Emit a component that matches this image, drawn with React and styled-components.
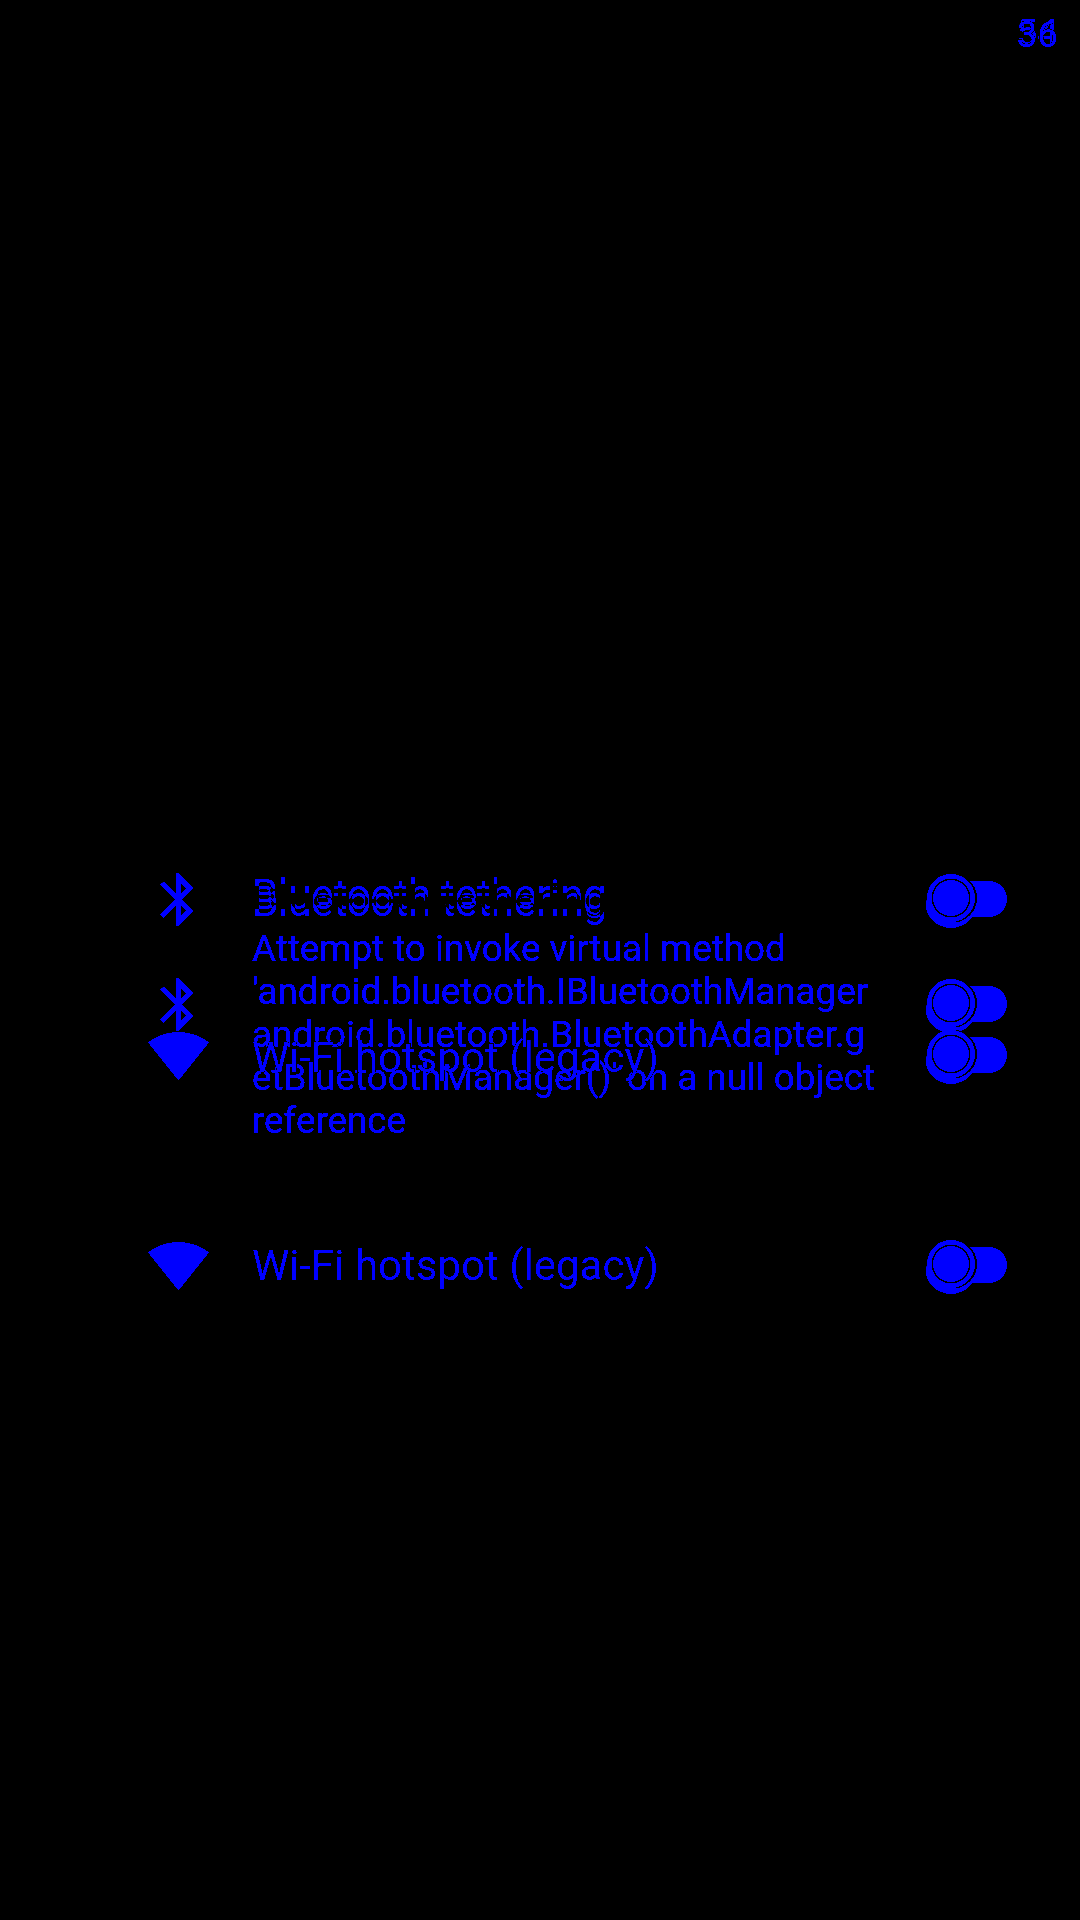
import styled, { createGlobalStyle } from "styled-components";

const GlobalStyle = createGlobalStyle`
html, body {
  margin: 0;
  padding: 0;
  background: #000;
}
`;

// the contrast filter gives the hard, unsmoothed pixel edges of the screenshot
const Screen = styled.div`
width: 1080px;
height: 1920px;
background: #000;
color: #00f;
font-family: Roboto, "Liberation Sans", sans-serif;
overflow: hidden;
display: flex;
flex-direction: column;
filter: contrast(100);
`;

const StatusBar = styled.div`
height: 821px;
display: flex;
justify-content: flex-end;
padding: 17px 22px 0 0;
box-sizing: border-box;
`;

const Clock = styled.div`
display: grid;
font-size: 37px;
line-height: 32px;
height: 32px;
`;

const Digits = styled.span`
grid-area: 1 / 1;
margin-top: ${(p) => p.$drop || 0}px;
paint-order: stroke fill;
-webkit-text-stroke: 1px #000;
`;

const Layers = styled.div`
display: grid;
`;

const List = styled.div`
grid-area: 1 / 1;
display: flex;
flex-direction: column;
`;

const Row = styled.div`
display: flex;
align-items: center;
height: ${(p) => p.$height}px;
padding: 0 73px 0 147px;
box-sizing: border-box;
`;

const IconSlot = styled.div`
width: 63px;
height: 63px;
margin-right: 42px;
flex: none;
`;

const Body = styled.div`
width: 630px;
flex: none;
`;

const Title = styled.div`
font-size: 42px;
line-height: 56px;
margin-top: ${(p) => p.$nudge || 0}px;
margin-bottom: ${(p) => (p.$hasSummary ? 4 : 0)}px;
letter-spacing: ${(p) => (p.$tight ? -0.1 : 0)}px;
mix-blend-mode: ${(p) => (p.$xor ? "difference" : "normal")};
paint-order: stroke fill;
-webkit-text-stroke: ${(p) => (p.$xor ? 0 : 1)}px #000;
`;

const Summary = styled.div`
font-size: 36.75px;
line-height: 43px;
overflow-wrap: anywhere;
-webkit-text-stroke: 0.35px #00f;
`;

const Switch = styled.div`
margin-left: auto;
position: relative;
isolation: isolate;
width: 72px;
height: 36px;
background: #00f;
border-radius: 18px;
`;

const Thumb = styled.div`
position: absolute;
left: -2px;
top: -1px;
width: 36px;
height: 36px;
border-radius: 50%;
background: #00f;
box-shadow: 0 0 0 1.5px #000, 0 0 0 6px #00f, 1.5px 0 0 6.5px #000;

&::before {
  content: "";
  position: absolute;
  z-index: -1;
  left: -7px;
  top: 0;
  width: 50px;
  height: 50px;
  border-radius: 50%;
  background: #00f;
  box-shadow: inset 0 -3px 0 -1px #000;
}
`;

function BluetoothIcon() {
  return (
    <svg width="63" height="63" viewBox="0 0 24 24" fill="#00f">
      <path d="M17.71 7.71L12 2h-1v7.59L6.41 5 5 6.41 10.59 12 5 17.59 6.41 19 11 14.41V22h1l5.71-5.71-4.3-4.29 4.3-4.29zM13 5.83l1.88 1.88L13 9.59V5.83zm1.88 10.46L13 18.17v-3.76l1.88 1.88z" />
    </svg>
  );
}

function WifiIcon() {
  return (
    <svg width="63" height="63" viewBox="0 0 24 24" fill="#00f">
      <path d="M12.01 21.49L23.64 7c-.45-.34-4.93-4-11.64-4C5.28 3 .81 6.66.36 7l11.64 14.5.01-.01z" />
    </svg>
  );
}

const plainRows = [
  { icon: <BluetoothIcon />, title: "Bluetooth tethering", height: 156, xor: true, tight: true, nudge: 6 },
  { icon: <WifiIcon />, title: "Wi-Fi hotspot (legacy)", height: 156, nudge: 5 },
];

const errorRows = [
  {
    icon: <BluetoothIcon />,
    title: "Bluetooth tethering",
    summary:
      "Attempt to invoke virtual method 'android.bluetooth.IBluetoothManager android.bluetooth.BluetoothAdapter.getBluetoothManager()' on a null object reference",
    height: 366,
    tight: true,
  },
  { icon: <WifiIcon />, title: "Wi-Fi hotspot (legacy)", height: 156, nudge: 2 },
];

function TetherList({ rows }) {
  return (
    <List>
      {rows.map((row) => (
        <Row key={row.title} $height={row.height}>
          <IconSlot>{row.icon}</IconSlot>
          <Body>
            <Title $xor={row.xor} $tight={row.tight} $nudge={row.nudge} $hasSummary={!!row.summary}>
              {row.title}
            </Title>
            {row.summary && <Summary>{row.summary}</Summary>}
          </Body>
          <Switch>
            <Thumb />
          </Switch>
        </Row>
      ))}
    </List>
  );
}

export default function App() {
  return (
    <Screen>
      <GlobalStyle />
      <StatusBar>
        <Clock>
          <Digits>54</Digits>
          <Digits $drop={2}>36</Digits>
        </Clock>
      </StatusBar>
      <Layers>
        <TetherList rows={errorRows} />
        <TetherList rows={plainRows} />
      </Layers>
    </Screen>
  );
}
